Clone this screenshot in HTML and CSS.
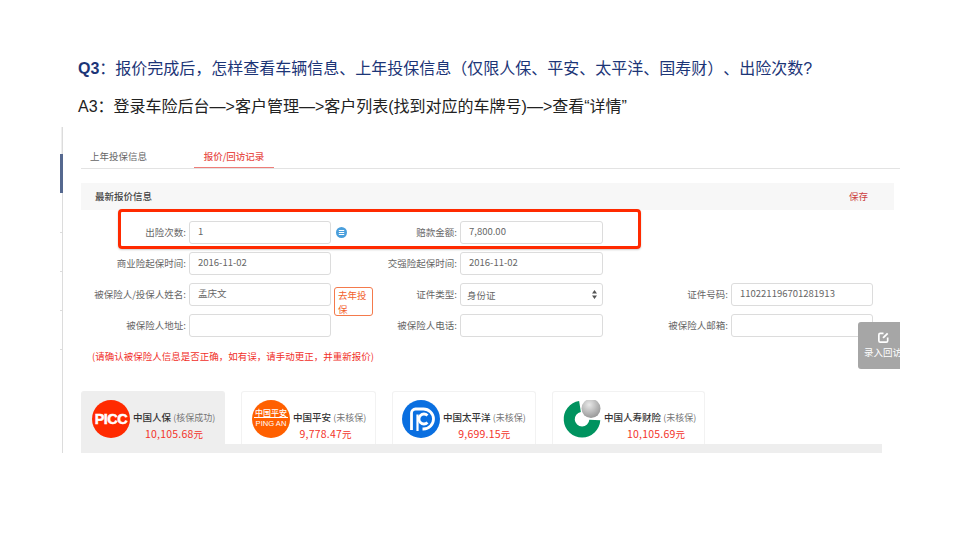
FILE: index.html
```html
<!DOCTYPE html>
<html lang="zh-CN">
<head>
<meta charset="utf-8">
<title>Q3</title>
<link rel="stylesheet" href="styles.css">
</head>
<body>
<main class="slide">
  <h1 class="question"><b>Q3</b>：报价完成后，怎样查看车辆信息、上年投保信息（仅限人保、平安、太平洋、国寿财）、出险次数?</h1>
  <p class="answer">A3：登录车险后台—&gt;客户管理—&gt;客户列表(找到对应的车牌号)—&gt;查看“详情”</p>
  <section class="shot">
    <div class="rail">
      <i class="rail-top"></i><i class="rail-thumb"></i><i class="tick"></i><i class="tick"></i><i class="tick"></i><i class="tick"></i>
    </div>
    <div class="content">
      <nav class="tabs">
        <span class="tab">上年投保信息</span>
        <span class="tab active">报价/回访记录</span>
      </nav>
      <header class="bar"><span>最新报价信息</span><span class="save">保存</span></header>
      <div class="form">
        <label>出险次数:</label><div class="field">1</div>
        <div class="extra"><svg class="list-icon" width="11" height="11" viewBox="0 0 11 11"><circle cx="5.5" cy="5.5" r="5.5" fill="#4a9fdc"/><path d="M2.800 3.500h5.400M2.800 5.500h5.400M2.800 7.500h5.400" stroke="#fff" stroke-width="1.200"/></svg></div>
        <label>赔款金额:</label><div class="field">7,800.00</div><span></span><span></span><span></span>

        <label>商业险起保时间:</label><div class="field">2016-11-02</div><span></span>
        <label>交强险起保时间:</label><div class="field">2016-11-02</div><span></span><span></span><span></span>

        <label>被保险人/投保人姓名:</label><div class="field">孟庆文</div>
        <div class="extra"><span class="last-year">去年投保</span></div>
        <label>证件类型:</label><div class="field select">身份证<svg width="5" height="9" viewBox="0 0 5 9"><path d="M2.500 0L5 3.500H0zM2.500 9L0 5.500h5z" fill="#555"/></svg></div><span></span>
        <label>证件号码:</label><div class="field">110221196701281913</div>

        <label>被保险人地址:</label><div class="field"></div><span></span>
        <label>被保险人电话:</label><div class="field"></div><span></span>
        <label>被保险人邮箱:</label><div class="field"></div>
      </div>
      <p class="notice">(请确认被保险人信息是否正确，如有误，请手动更正，并重新报价)</p>
      <div class="cards">
        <article class="card selected">
          <svg class="logo" width="38" height="38" viewBox="0 0 38 38"><circle cx="19" cy="19" r="19" fill="#ff2a00"/><text x="19" y="24" text-anchor="middle" class="picc">PICC</text></svg>
          <div class="info"><div><b>中国人保</b> <i>(核保成功)</i></div><div class="price">10,105.68<small>元</small></div></div>
        </article>
        <article class="card">
          <svg class="logo" width="38" height="38" viewBox="0 0 38 38"><circle cx="19" cy="19" r="19" fill="#ff6000"/><text x="19" y="15.500" text-anchor="middle" class="pa1">中国平安</text><rect x="2" y="17" width="34" height="1" fill="#fff"/><text x="19" y="25.500" text-anchor="middle" class="pa2">PING AN</text></svg>
          <div class="info"><div><b>中国平安</b> <i>(未核保)</i></div><div class="price shift-left">9,778.47<small>元</small></div></div>
        </article>
        <article class="card narrow-pad">
          <svg class="logo" width="38" height="38" viewBox="0 0 38 38"><circle cx="19" cy="19" r="19" fill="#0a6fe0"/><path d="M9.500 30V13a4 4 0 0 1 4-4h8a10 10 0 0 1 0 20h-1" fill="none" stroke="#fff" stroke-width="2.800"/><path d="M15.500 31V14.500" stroke="#fff" stroke-width="2.200"/><path d="M25.500 15.500a5 5 0 1 0 0 7" fill="none" stroke="#fff" stroke-width="2.800"/></svg>
          <div class="info"><div><b>中国太平洋</b> <i>(未核保)</i></div><div class="price">9,699.15<small>元</small></div></div>
        </article>
        <article class="card">
          <svg class="logo" width="38" height="38" viewBox="0 0 38 38"><defs><radialGradient id="ball" cx="0.4" cy="0.3" r="0.8"><stop offset="0" stop-color="#e8e8e8"/><stop offset="1" stop-color="#8e8e8e"/></radialGradient></defs><path d="M17 6.500A12.800 12.800 0 1 0 31.800 20" fill="none" stroke="#00935f" stroke-width="11"/><circle cx="28" cy="8.500" r="9.500" fill="url(#ball)"/></svg>
          <div class="info"><div><b>中国人寿财险</b> <i>(未核保)</i></div><div class="price shift-right">10,105.69<small>元</small></div></div>
        </article>
      </div>
      <div class="card-base"></div>
    </div>
    <div class="highlight"></div>
    <aside class="visit">
      <svg width="13" height="13" viewBox="0 0 14 14"><path d="M7 2.500H3.500a1.500 1.500 0 0 0-1.500 1.500v6.500a1.500 1.500 0 0 0 1.500 1.500H10a1.500 1.500 0 0 0 1.500-1.500V7" fill="none" stroke="#fff" stroke-width="1.800"/><path d="M6.500 7.500L11.500 2.500" stroke="#fff" stroke-width="2"/></svg>
      <span>录入回访</span>
    </aside>
  </section>
</main>
</body>
</html>
```
FILE: styles.css
```css
* { box-sizing: border-box; }
html, body { margin: 0; background: #fff; }
body { width: 960px; height: 540px; overflow: hidden; font-family: "Noto Sans CJK SC", "Liberation Sans", sans-serif; text-spacing-trim: space-all; }
.slide { padding: 57px 0 0 78px; }
.question { margin: 0; font-size: 16px; line-height: 24px; font-weight: 400; color: #1c3577; white-space: nowrap; font-family: "Liberation Sans", "Noto Sans CJK SC", sans-serif; }
.question b { font-weight: 700; }
.answer { margin: 14px 0 0; font-size: 16px; line-height: 24px; color: #222; white-space: nowrap; font-family: "Liberation Sans", "Noto Sans CJK SC", sans-serif; }
.shot { position: relative; width: 840px; height: 326px; margin: 8px 0 0 -18px; overflow: hidden; display: flex; }
.rail { width: 3px; flex: none; border-right: 1px solid #dcdcdc; display: flex; flex-direction: column; }
.rail i { display: block; }
.rail-top { height: 27px; background: #efefef; margin-left: 1px; }
.rail-thumb { height: 39px; background: #55688f; margin-right: -1px; }
.tick { height: 1px; width: 2px; background: #dcdcdc; margin-bottom: 38px; }
.tick:nth-child(3) { margin-top: 39px; }
.content { margin-left: 18px; width: 819px; font-size: 9.5px; color: #666; }
.tabs { display: flex; height: 42px; padding-top: 22px; border-bottom: 1px solid #e3e3e3; }
.tab { width: 113px; height: 19px; line-height: 14px; padding-left: 9px; }
.tab.active { width: 80px; text-align: center; padding-left: 0; color: #e8504a; font-weight: 500; border-bottom: 1px solid #ee7d78; }
.bar { width: 813px; height: 27px; margin-top: 14px; padding: 0 26px 2px 14px; background: #f7f7f7; display: flex; justify-content: space-between; align-items: center; color: #444; font-weight: 500; }
.save { color: #cc3f42; font-weight: 400; }
.form { display: grid; grid-template-columns: 108px 142px 26px 103px 143px 25px 103px 142px; grid-auto-rows: 23px; row-gap: 8px; margin-top: 11px; }
.form label { text-align: right; padding-right: 3px; line-height: 22px; white-space: nowrap; }
.field { border: 1px solid #dcdcdc; border-radius: 3px; padding-left: 8px; line-height: 18px; color: #666; background: #fff; }
.select { display: flex; align-items: center; justify-content: space-between; padding-right: 5px; padding-left: 6px; }
.extra { display: flex; align-items: flex-start; padding-left: 3px; }
.list-icon { margin: 6px 0 0 2px; }
.last-year { flex: none; width: 39px; height: 29px; margin-top: 4px; padding: 0 0 0 3px; border: 1px solid #f47a4c; border-radius: 3px; color: #f2622e; font-size: 9.5px; line-height: 14px; background: #fff; }
.notice { margin: 12px 0 0 11px; color: #f1302a; font-size: 9.5px; line-height: 14px; }
.cards { display: flex; gap: 16px; margin-top: 28px; }
.card { width: 135px; height: 53px; flex: none; display: flex; align-items: flex-start; padding: 8px 0 0 10px; border: 1px solid #f2f2f2; border-bottom: 0; border-radius: 3px 3px 0 0; background: #fff; }
.card:nth-child(3) { width: 144px; }
.card:nth-child(4) { width: 153px; }
.card.selected { width: 144px; background: #eee; border-color: #eee; }
.card.narrow-pad { padding-left: 9px; }
.logo { flex: none; }
.info { margin: 10px 0 0 3px; white-space: nowrap; font-size: 9.5px; line-height: 14px; color: #777; text-align: center; }
.info b { color: #333; font-weight: 500; }
.info i { font-style: normal; font-size: 9px; }
.price { margin-top: 2px; color: #f3342a; font-size: 10.5px; letter-spacing: 0.2px; }
.price small { font-size: 9.5px; }
.shift-left { padding-right: 8px; }
.shift-right { padding-left: 12px; }
.card-base { width: 801px; height: 10px; background: #eee; }
.picc { font: 800 14.5px "Liberation Sans", sans-serif; fill: #fff; stroke: #fff; stroke-width: 0.5px; letter-spacing: -0.5px; }
.pa1 { font: 500 8px "Noto Sans CJK SC", sans-serif; fill: #fff; }
.pa2 { font: 400 7.6px "Liberation Sans", sans-serif; fill: #fff; }
.highlight { position: absolute; left: 58px; top: 82px; width: 523px; height: 40px; border: 3px solid #ff2a00; border-radius: 4px; box-shadow: 0 1px 2px rgba(0,0,0,.2); }
.visit { position: absolute; left: 798px; top: 195px; width: 60px; height: 47px; border-radius: 3px; background: #a6a6a6; color: #fff; font-size: 9.5px; padding: 9px 0 0 6px; display: flex; flex-direction: column; gap: 1px; align-items: flex-start; white-space: nowrap; }
.visit svg { margin-left: 13px; }
```
